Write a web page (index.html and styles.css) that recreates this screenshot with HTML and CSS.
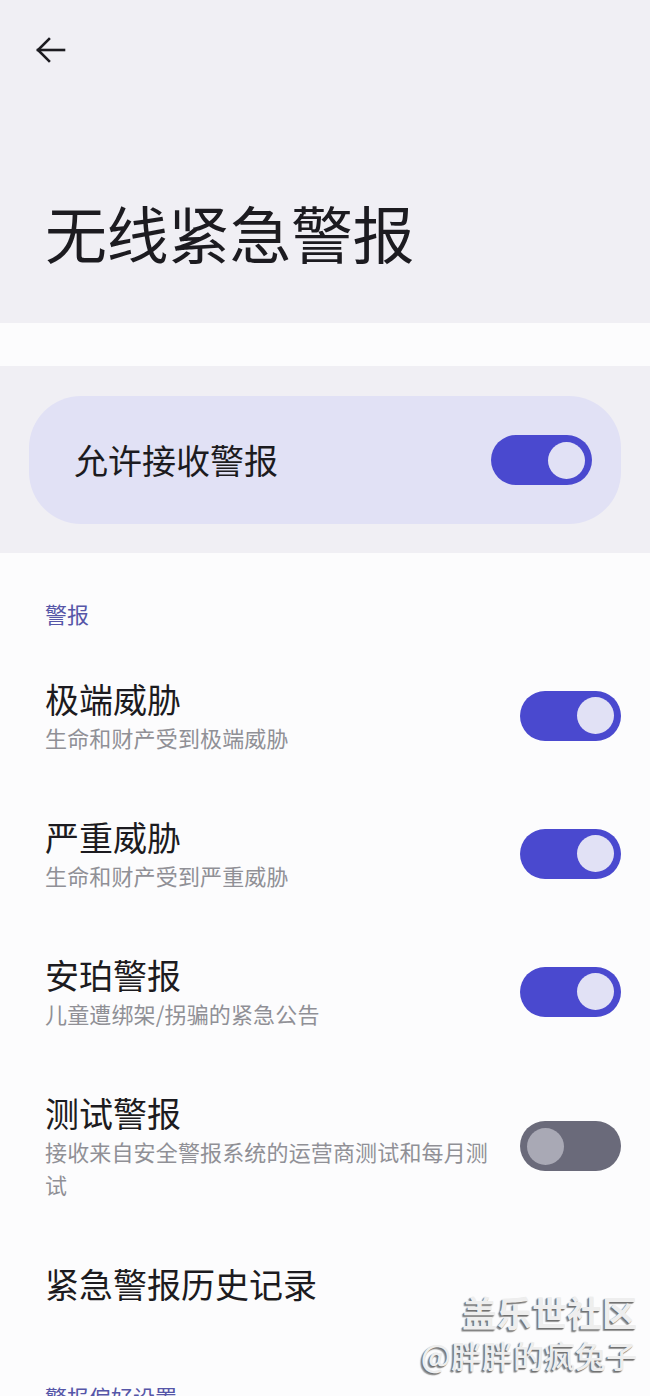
FILE: index.html
```html
<!DOCTYPE html>
<html lang="zh-CN">
<head>
<meta charset="utf-8">
<title>无线紧急警报</title>
<link rel="stylesheet" href="styles.css">
</head>
<body>
<div class="page">
  <header class="top">
    <div class="back">
      <svg width="32" height="32" viewBox="0 0 32 32" fill="none" stroke="#1c1b20" stroke-width="2.6" stroke-linecap="square">
        <path d="M30 16H4"/>
        <path d="M15 5L4 16l11 11" stroke-linejoin="miter"/>
      </svg>
    </div>
    <h1 class="title">无线紧急警报</h1>
  </header>
  <div class="spacer"></div>
  <section class="master">
    <div class="master-card">
      <span class="master-label">允许接收警报</span>
      <span class="switch on"><span class="knob"></span></span>
    </div>
  </section>
  <main class="list">
    <div class="section-head">警报</div>
    <div class="row">
      <div class="text">
        <div class="row-title">极端威胁</div>
        <div class="row-sub">生命和财产受到极端威胁</div>
      </div>
      <span class="switch on"><span class="knob"></span></span>
    </div>
    <div class="row">
      <div class="text">
        <div class="row-title">严重威胁</div>
        <div class="row-sub">生命和财产受到严重威胁</div>
      </div>
      <span class="switch on"><span class="knob"></span></span>
    </div>
    <div class="row">
      <div class="text">
        <div class="row-title">安珀警报</div>
        <div class="row-sub">儿童遭绑架/拐骗的紧急公告</div>
      </div>
      <span class="switch on"><span class="knob"></span></span>
    </div>
    <div class="row">
      <div class="text">
        <div class="row-title">测试警报</div>
        <div class="row-sub">接收来自安全警报系统的运营商测试和每月测试</div>
      </div>
      <span class="switch off"><span class="knob"></span></span>
    </div>
    <div class="row single">
      <div class="row-title">紧急警报历史记录</div>
    </div>
    <div class="section-head">警报偏好设置</div>
  </main>
  <div class="watermark">
    <div class="wm-1">盖乐世社区</div>
    <div class="wm-2">@胖胖的疯兔子</div>
  </div>
</div>
</body>
</html>
```

FILE: styles.css
```css
* { box-sizing: border-box; }
html, body {
  margin: 0;
  padding: 0;
  background: #fcfcfd;
}
body {
  font-family: "Noto Sans CJK SC", "Noto Sans", sans-serif;
  color: #1c1b20;
  width: 650px;
  height: 1396px;
  overflow: hidden;
}
.page {
  position: relative;
  width: 650px;
  height: 1396px;
  overflow: hidden;
}
.top {
  background: #f0eff4;
  height: 323px;
  padding: 34px 0 0 0;
}
.back {
  width: 32px;
  height: 32px;
  margin-left: 34px;
}
.back svg { display: block; }
.title {
  margin: 126px 0 0 45px;
  font-size: 62px;
  line-height: 80px;
  font-weight: 400;
  letter-spacing: -0.5px;
}
.spacer {
  height: 43px;
  background: #fcfcfd;
}
.master {
  background: #f0eff4;
  padding: 30px 29px 29px 29px;
}
.master-card {
  height: 128px;
  background: #e1e1f5;
  border-radius: 52px;
  display: flex;
  align-items: center;
  justify-content: space-between;
  padding: 0 29px 0 45px;
}
.master-label {
  font-size: 34px;
  line-height: 44px;
}
.switch {
  width: 101px;
  height: 50px;
  border-radius: 25px;
  display: flex;
  align-items: center;
  padding: 0 7px;
  flex: none;
}
.switch .knob {
  width: 37px;
  height: 37px;
  border-radius: 50%;
}
.switch.on {
  background: #4a49cf;
  justify-content: flex-end;
}
.switch.on .knob { background: #e1e1f5; }
.switch.off {
  background: #6a6a7a;
  justify-content: flex-start;
}
.switch.off .knob { background: #a9a9b5; }
.list {
  background: #fcfcfd;
  padding: 45px 29px 0 45px;
}
.section-head {
  color: #5656a8;
  font-size: 22px;
  line-height: 30px;
  margin-bottom: 19px;
}
.row {
  display: flex;
  align-items: center;
  justify-content: space-between;
  padding: 30px 0 31px 0;
  gap: 30px;
}
.row + .section-head { margin-top: 44px; }
.text { flex: 1; min-width: 0; }
.row-title {
  font-size: 34px;
  line-height: 44px;
}
.row-sub {
  font-size: 22px;
  line-height: 33px;
  letter-spacing: 0.15px;
  color: #909096;
}
.watermark {
  position: absolute;
  right: 13px;
  top: 1290px;
  text-align: right;
  color: #eeeeee;
  text-shadow: -1px 1px 1px #6e6e6e, -2px 2px 1px #9a9a9a;
}
.wm-1 {
  font-size: 35px;
  line-height: 44px;
  font-weight: 700;
}
.wm-2 {
  font-size: 31px;
  line-height: 42px;
  font-weight: 500;
}
```
